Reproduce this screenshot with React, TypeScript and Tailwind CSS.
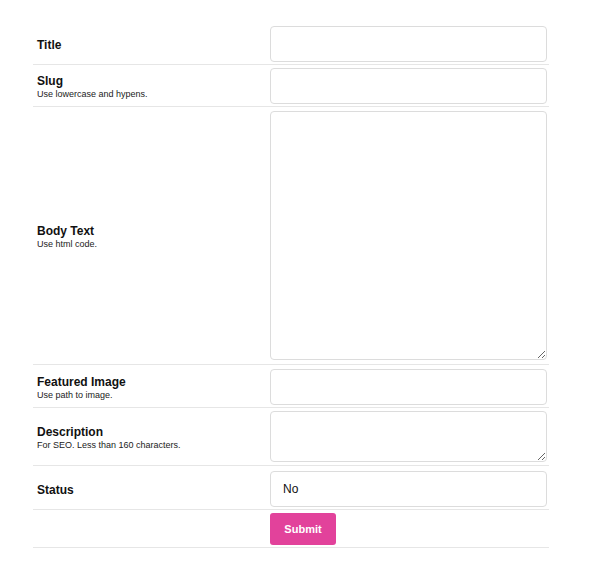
import React from "react";

const font = { fontFamily: '"Liberation Sans", Arial, sans-serif' };

function Label({ title, sub }: { title: string; sub?: string }) {
  return (
    <div className="w-[233px] shrink-0 pl-1 flex flex-col justify-center pt-[2px]">
      <div className="text-[12px] font-bold leading-[14px] text-[#111]">{title}</div>
      {sub && <div className="text-[9px] leading-[11px] mt-[1px] text-[#222]">{sub}</div>}
    </div>
  );
}

const inputCls =
  "block w-[277px] h-9 rounded-[4px] border border-[#dcdcdc] bg-white outline-none px-3 text-[12px] text-[#111]";

export default function App() {
  return (
    <div className="w-[600px] h-[584px] bg-white" style={font}>
      <div className="pt-[22px] pl-[33px] w-[549px]">
        <div className="flex border-b border-[#e6e6e6] pt-1 pb-[2px]">
          <Label title="Title" />
          <div className="pl-1">
            <input className={inputCls} />
          </div>
        </div>
        <div className="flex border-b border-[#e6e6e6] pt-[3px] pb-[2px]">
          <Label title="Slug" sub="Use lowercase and hypens." />
          <div className="pl-1">
            <input className={inputCls} />
          </div>
        </div>
        <div className="flex border-b border-[#e6e6e6] pt-1 pb-[4px]">
          <Label title="Body Text" sub="Use html code." />
          <div className="pl-1">
            <textarea className="block w-[277px] h-[249px] rounded-[4px] border border-[#dcdcdc] bg-white outline-none" />
          </div>
        </div>
        <div className="flex border-b border-[#e6e6e6] pt-1 pb-[2px]">
          <Label title="Featured Image" sub="Use path to image." />
          <div className="pl-1">
            <input className={inputCls} />
          </div>
        </div>
        <div className="flex border-b border-[#e6e6e6] pt-[3px] pb-[3px]">
          <Label title="Description" sub="For SEO. Less than 160 characters." />
          <div className="pl-1">
            <textarea className="block w-[277px] h-[51px] rounded-[4px] border border-[#dcdcdc] bg-white outline-none" />
          </div>
        </div>
        <div className="flex border-b border-[#e6e6e6] pt-[5px] pb-[2px]">
          <Label title="Status" />
          <div className="pl-1">
            <div className="w-[277px] h-9 rounded-[4px] border border-[#dcdcdc] bg-white px-3 flex items-center text-[12px] text-[#111]">
              No
            </div>
          </div>
        </div>
        <div className="flex border-b border-[#e6e6e6] pt-[3px] pb-[2px]">
          <div className="w-[233px] shrink-0" />
          <div className="pl-1">
            <button className="w-[66px] h-[32px] rounded-[3px] bg-[#e2429b] text-white text-[11px] font-bold">
              Submit
            </button>
          </div>
        </div>
      </div>
    </div>
  );
}
